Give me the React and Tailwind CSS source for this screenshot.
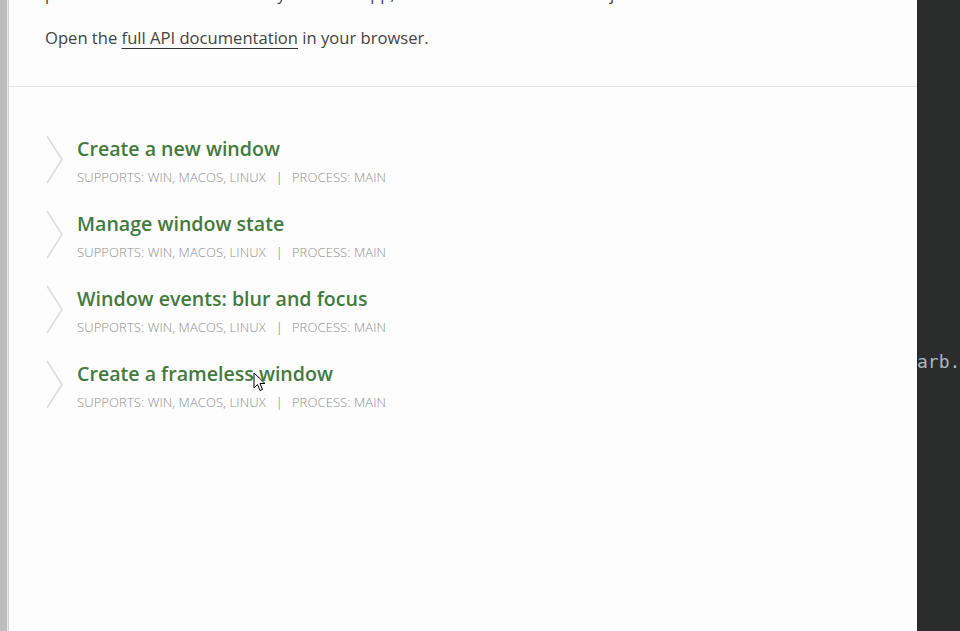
import React from "react";

const items = [
  "Create a new window",
  "Manage window state",
  "Window events: blur and focus",
  "Create a frameless window",
];

function Chevron() {
  return (
    <svg width="18" height="50" viewBox="0 0 18 50" className="shrink-0 mt-[1px]">
      <polyline points="1,1 16,24.5 1,48" fill="none" stroke="#dcdcdc" strokeWidth="1.6" />
    </svg>
  );
}

function Cursor() {
  return (
    <svg width="14" height="21" viewBox="0 0 14 21" className="absolute left-[253px] top-[372px]">
      <path d="M1 1 L1 16 L4.5 12.5 L7 18.5 L9.5 17.5 L7 11.5 L12 11.5 Z" fill="#fff" stroke="#000" strokeWidth="1" strokeLinejoin="round" />
    </svg>
  );
}

export default function App() {
  return (
    <div className="relative flex h-[631px] w-[960px] overflow-hidden bg-[#fdfdfd]" style={{ fontFamily: '"Open Sans", "Noto Sans", sans-serif' }}>
      <div className="w-[7px] shrink-0 bg-[#bdbdbd]" />
      <div className="w-px shrink-0 bg-[#ececec]" />
      <div className="w-px shrink-0 bg-[#d2d2d2]" />
      <div className="flex min-w-0 flex-1 flex-col bg-[#fdfdfd]">
        <div className="border-b border-[#e2e2e2] pl-[36px] pb-[35px] text-[16.6px] leading-[26px] text-[#444]">
          <p className="mt-[-19px] whitespace-nowrap">
            process that controls the life cycle of the app, has full access to the Node.js APIs.
          </p>
          <p className="mt-[18px] whitespace-nowrap">
            Open the{" "}
            <span className="underline decoration-[#333] decoration-1 underline-offset-[4px]">full API documentation</span>{" "}
            in your browser.
          </p>
        </div>
        <div className="flex flex-col gap-[23px] pl-[37px] pt-[47px]">
          {items.map((t) => (
            <div key={t} className="flex items-start gap-[13px]">
              <Chevron />
              <div className="flex flex-col">
                <div className="mt-[1px] text-[19.6px] font-semibold leading-[28px] text-[#437a3d]">{t}</div>
                <div className="mt-[5px] flex items-center whitespace-nowrap text-[13px] font-light leading-[18px] tracking-[0.1px] text-[#8f8f8f]">
                  <span>SUPPORTS: WIN, MACOS, LINUX</span>
                  <span className="ml-[10px] mr-[9px] text-[#777]">|</span>
                  <span>PROCESS: MAIN</span>
                </div>
              </div>
            </div>
          ))}
        </div>
      </div>
      <div className="w-[43px] shrink-0 border-l border-[#262827] bg-[#2b2d2c] pt-[351px]">
        <div
          className="ml-[-1px] overflow-hidden whitespace-nowrap text-[18px] leading-[22px] text-[#a9b7c6]"
          style={{ fontFamily: '"DejaVu Sans Mono", monospace' }}
        >
          arb.
        </div>
      </div>
      <Cursor />
    </div>
  );
}
